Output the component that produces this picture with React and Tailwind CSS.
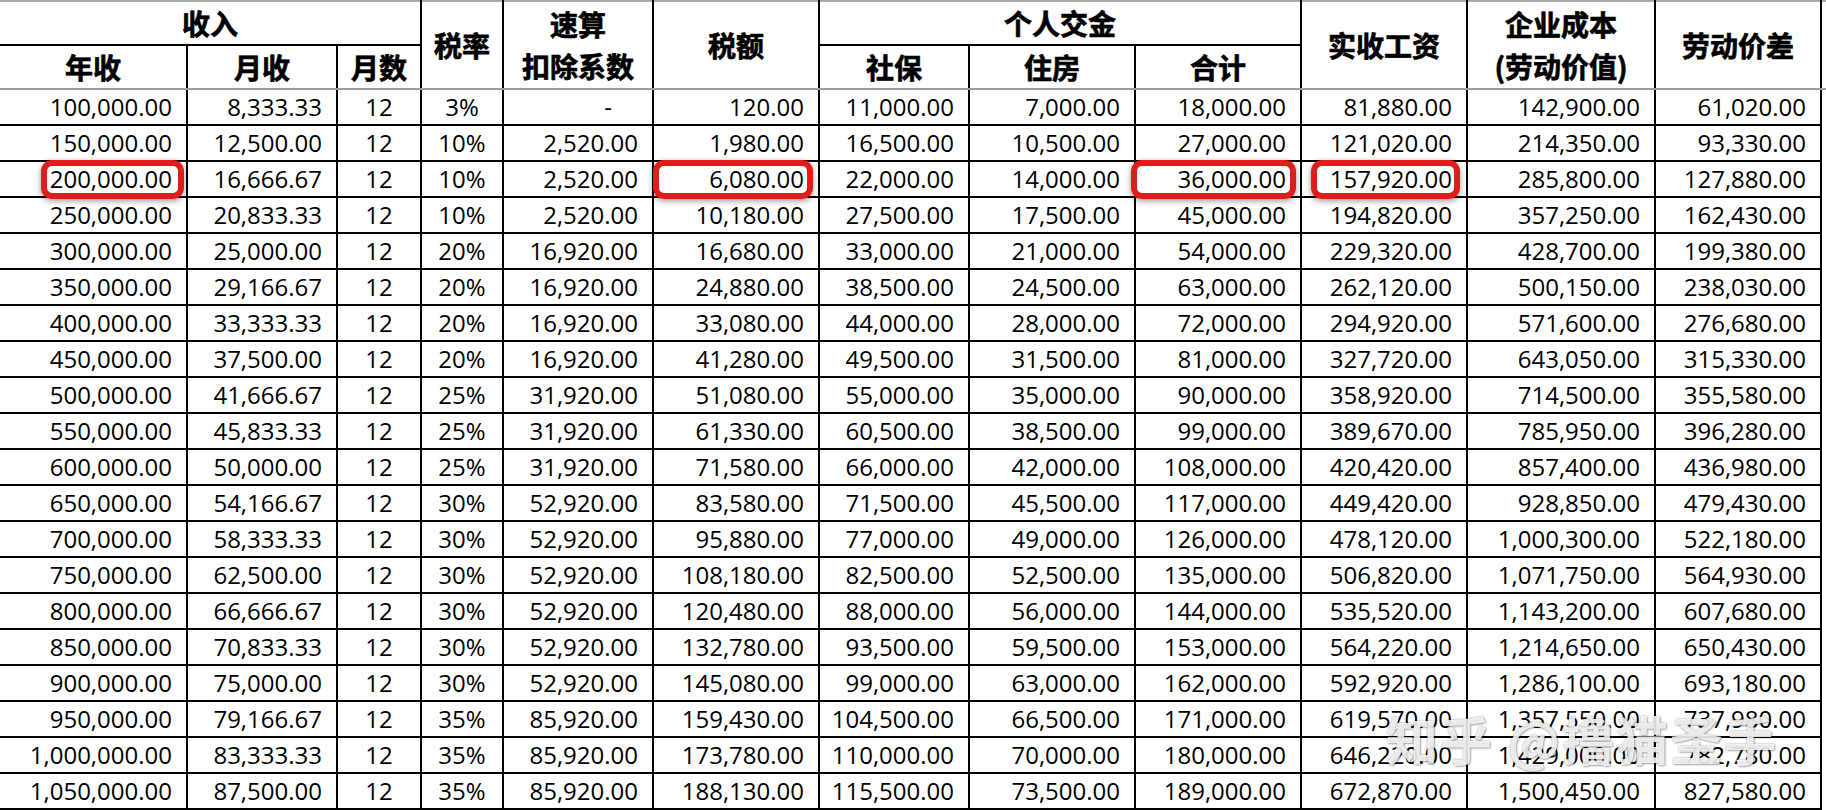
import React from 'react';

const widths = ['w-[187px]', 'w-[150px]', 'w-[84px]', 'w-[82px]', 'w-[150px]', 'w-[166px]', 'w-[150px]', 'w-[166px]', 'w-[166px]', 'w-[166px]', 'w-[188px]', 'w-[166px]', 'w-[5px]'];

// 年收, 月收, 月数, 税率, 速算扣除, 税额, 社保, 住房, 合计, 实收工资, 企业成本, 劳动价差
const rows = [
  ['100,000.00', '8,333.33', '12', '3%', '-', '120.00', '11,000.00', '7,000.00', '18,000.00', '81,880.00', '142,900.00', '61,020.00'],
  ['150,000.00', '12,500.00', '12', '10%', '2,520.00', '1,980.00', '16,500.00', '10,500.00', '27,000.00', '121,020.00', '214,350.00', '93,330.00'],
  ['200,000.00', '16,666.67', '12', '10%', '2,520.00', '6,080.00', '22,000.00', '14,000.00', '36,000.00', '157,920.00', '285,800.00', '127,880.00'],
  ['250,000.00', '20,833.33', '12', '10%', '2,520.00', '10,180.00', '27,500.00', '17,500.00', '45,000.00', '194,820.00', '357,250.00', '162,430.00'],
  ['300,000.00', '25,000.00', '12', '20%', '16,920.00', '16,680.00', '33,000.00', '21,000.00', '54,000.00', '229,320.00', '428,700.00', '199,380.00'],
  ['350,000.00', '29,166.67', '12', '20%', '16,920.00', '24,880.00', '38,500.00', '24,500.00', '63,000.00', '262,120.00', '500,150.00', '238,030.00'],
  ['400,000.00', '33,333.33', '12', '20%', '16,920.00', '33,080.00', '44,000.00', '28,000.00', '72,000.00', '294,920.00', '571,600.00', '276,680.00'],
  ['450,000.00', '37,500.00', '12', '20%', '16,920.00', '41,280.00', '49,500.00', '31,500.00', '81,000.00', '327,720.00', '643,050.00', '315,330.00'],
  ['500,000.00', '41,666.67', '12', '25%', '31,920.00', '51,080.00', '55,000.00', '35,000.00', '90,000.00', '358,920.00', '714,500.00', '355,580.00'],
  ['550,000.00', '45,833.33', '12', '25%', '31,920.00', '61,330.00', '60,500.00', '38,500.00', '99,000.00', '389,670.00', '785,950.00', '396,280.00'],
  ['600,000.00', '50,000.00', '12', '25%', '31,920.00', '71,580.00', '66,000.00', '42,000.00', '108,000.00', '420,420.00', '857,400.00', '436,980.00'],
  ['650,000.00', '54,166.67', '12', '30%', '52,920.00', '83,580.00', '71,500.00', '45,500.00', '117,000.00', '449,420.00', '928,850.00', '479,430.00'],
  ['700,000.00', '58,333.33', '12', '30%', '52,920.00', '95,880.00', '77,000.00', '49,000.00', '126,000.00', '478,120.00', '1,000,300.00', '522,180.00'],
  ['750,000.00', '62,500.00', '12', '30%', '52,920.00', '108,180.00', '82,500.00', '52,500.00', '135,000.00', '506,820.00', '1,071,750.00', '564,930.00'],
  ['800,000.00', '66,666.67', '12', '30%', '52,920.00', '120,480.00', '88,000.00', '56,000.00', '144,000.00', '535,520.00', '1,143,200.00', '607,680.00'],
  ['850,000.00', '70,833.33', '12', '30%', '52,920.00', '132,780.00', '93,500.00', '59,500.00', '153,000.00', '564,220.00', '1,214,650.00', '650,430.00'],
  ['900,000.00', '75,000.00', '12', '30%', '52,920.00', '145,080.00', '99,000.00', '63,000.00', '162,000.00', '592,920.00', '1,286,100.00', '693,180.00'],
  ['950,000.00', '79,166.67', '12', '35%', '85,920.00', '159,430.00', '104,500.00', '66,500.00', '171,000.00', '619,570.00', '1,357,550.00', '737,980.00'],
  ['1,000,000.00', '83,333.33', '12', '35%', '85,920.00', '173,780.00', '110,000.00', '70,000.00', '180,000.00', '646,220.00', '1,429,000.00', '782,780.00'],
  ['1,050,000.00', '87,500.00', '12', '35%', '85,920.00', '188,130.00', '115,500.00', '73,500.00', '189,000.00', '672,870.00', '1,500,450.00', '827,580.00'],
];

// red marks drawn over the 200k row
const marks = {
  0: 'left-[41px] right-[2px]',
  5: 'left-[-1px] right-[5px]',
  8: 'left-[-5px] right-[4px]',
  9: 'left-[9px] right-[6px]',
};

const cellBase = 'border-b-2 border-r-2 border-b-black border-r-black p-0 align-middle relative';
const headBase = 'border-b-2 border-r-2 border-t-2 border-t-[#a9a9a9] border-r-black p-0 align-middle text-center';

function Head({ children, rowSpan, colSpan, grayRight, grayBottom, noTop }) {
  return (
    <th
      rowSpan={rowSpan}
      colSpan={colSpan}
      className={`${headBase} ${grayBottom ? 'border-b-[#9c9c9c]' : 'border-b-black'} ${grayRight ? 'border-r-[#9c9c9c]' : ''} ${noTop ? 'border-t-0' : ''} font-bold text-[28px] leading-[42px] [-webkit-text-stroke:0.7px_black]`}
    >
      {children}
    </th>
  );
}

export default function App() {
  return (
    <div className="relative w-[1826px] h-[810px] overflow-hidden bg-white text-black" style={{ fontFamily: '"Open Sans", "Noto Sans CJK SC", sans-serif' }}>
      <table className="table-fixed border-collapse w-[1826px]">
        <colgroup>
          {widths.map((w, i) => (
            <col key={i} className={w} />
          ))}
        </colgroup>
        <thead style={{ fontFamily: '"Noto Sans CJK SC", "Noto Sans", sans-serif' }}>
          <tr className="h-[42px]">
            <Head colSpan={3} grayRight>收入</Head>
            <Head rowSpan={2} grayBottom>税率</Head>
            <Head rowSpan={2} grayBottom>速算<br />扣除系数</Head>
            <Head rowSpan={2} grayBottom>税额</Head>
            <Head colSpan={3}>个人交金</Head>
            <Head rowSpan={2} grayBottom>实收工资</Head>
            <Head rowSpan={2} grayBottom>企业成本<br />(劳动价值)</Head>
            <Head rowSpan={2} grayBottom>劳动价差</Head>
            <th rowSpan={2} className="border-t-2 border-t-[#a9a9a9] border-b-2 border-b-[#9c9c9c] p-0" />
          </tr>
          <tr className="h-[42px]">
            <Head grayBottom noTop>年收</Head>
            <Head grayBottom noTop>月收</Head>
            <Head grayBottom grayRight noTop>月数</Head>
            <Head grayBottom noTop>社保</Head>
            <Head grayBottom noTop>住房</Head>
            <Head grayBottom noTop>合计</Head>
          </tr>
        </thead>
        <tbody className="text-[24px]">
          {rows.map((r, ri) => (
            <tr key={ri} className="h-[36px]">
              {r.map((v, ci) => {
                const center = ci === 2 || ci === 3;
                const dash = v === '-';
                return (
                  <td
                    key={ci}
                    className={`${cellBase} ${ci === 2 ? 'border-r-[#9c9c9c]' : ''} ${center ? 'text-center' : dash ? 'text-right pr-[40px]' : 'text-right pr-[14px]'} leading-[34px] whitespace-nowrap`}
                  >
                    {v}
                    {ri === 2 && marks[ci] && (
                      <span className={`absolute top-[-2px] bottom-[-3px] ${marks[ci]} border-[6px] border-[#dc1f1c] rounded-[11px] shadow-[0_2px_6px_rgba(0,0,0,0.4)]`} />
                    )}
                  </td>
                );
              })}
              <td className="p-0" />
            </tr>
          ))}
          <tr className="h-[8px]">
            {widths.slice(0, 12).map((w, i) => (
              <td key={i} className={`p-0 border-r-2 ${i === 2 ? 'border-r-[#a9a9a9]' : 'border-r-[#e2e2e2]'}`} />
            ))}
            <td className="p-0" />
          </tr>
        </tbody>
      </table>

      <div
        className="absolute left-[1386px] top-[700px] text-[52px] font-bold text-white/85 tracking-[2px] whitespace-nowrap [text-shadow:0_0_2px_rgba(0,0,0,0.4),1px_1px_2px_rgba(0,0,0,0.25)]"
        style={{ fontFamily: '"Noto Sans CJK SC", sans-serif' }}
      >
        知乎 @撸猫圣手
      </div>
    </div>
  );
}
